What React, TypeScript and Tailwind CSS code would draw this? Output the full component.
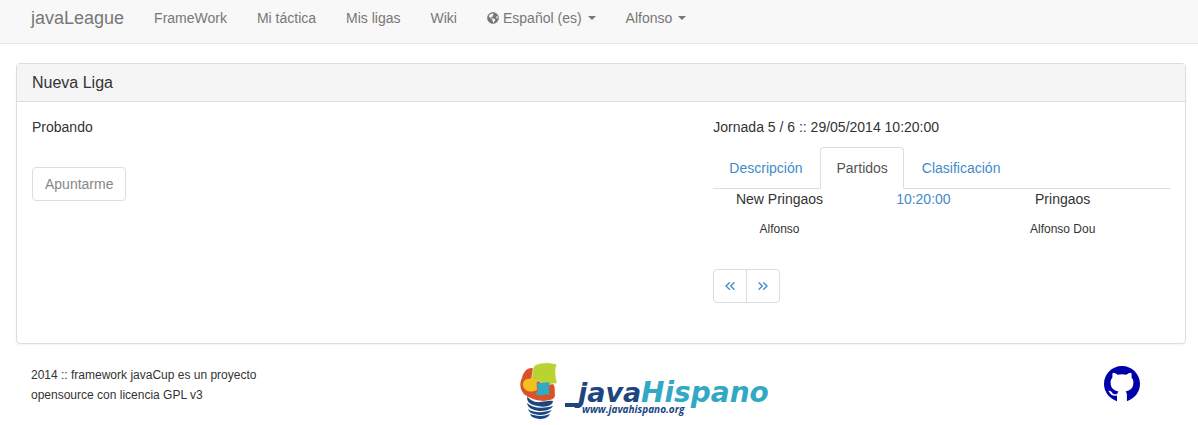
import { ChevronsLeft, ChevronsRight } from "lucide-react";
import { FaGlobeAmericas } from "react-icons/fa";

const navLinks = ["FrameWork", "Mi táctica", "Mis ligas", "Wiki"];

function Caret() {
  return <span className="ml-1.5 inline-block border-x-4 border-t-4 border-x-transparent border-t-[#777] align-middle" />;
}

function Navbar() {
  return (
    <nav className="flex items-center border-b border-[#e7e7e7] bg-[#f8f8f8] pt-2 pb-[15px] pl-[31px] text-[#777]">
      <a href="#" className="mr-[30px] text-lg leading-5">
        javaLeague
      </a>
      <ul className="flex gap-[30px]">
        {navLinks.map((label) => (
          <li key={label}>
            <a href="#">{label}</a>
          </li>
        ))}
        <li>
          <button type="button" className="flex items-center">
            <FaGlobeAmericas size={12} className="mr-1" />
            Español (es)
            <Caret />
          </button>
        </li>
        <li>
          <button type="button" className="flex items-center">
            Alfonso
            <Caret />
          </button>
        </li>
      </ul>
    </nav>
  );
}

function Tabs() {
  return (
    <div role="tablist" className="mt-2.5 flex gap-0.5 border-b border-[#ddd]">
      <button type="button" role="tab" aria-selected="false" className="-mb-px border border-transparent px-[15px] py-2.5 text-[#428bca]">
        Descripción
      </button>
      <button type="button" role="tab" aria-selected="true" className="-mb-px rounded-t border border-[#ddd] border-b-white bg-white px-[15px] py-2.5 text-[#555]">
        Partidos
      </button>
      <button type="button" role="tab" aria-selected="false" className="-mb-px border border-transparent px-[15px] py-2.5 text-[#428bca]">
        Clasificación
      </button>
    </div>
  );
}

function Matches() {
  return (
    <table className="w-full table-fixed text-center">
      <tbody>
        <tr>
          <td className="w-[29%]">New Pringaos</td>
          <td className="w-[34%]">
            <a href="#" className="text-[#428bca]">
              10:20:00
            </a>
          </td>
          <td className="w-[27%]">Pringaos</td>
          <td />
        </tr>
        <tr className="text-xs leading-5">
          <td className="pt-2.5">Alfonso</td>
          <td />
          <td className="pt-2.5">Alfonso Dou</td>
          <td />
        </tr>
      </tbody>
    </table>
  );
}

function JavaHispanoLogo() {
  return (
    <svg width="256" height="62" viewBox="0 0 256 62" role="img" aria-label="javaHispano">
      <path d="M13 8 C7 8 4 13 3 18 C0 23 1 31 6 35 C11 38 18 41 25 41 C32 40 36 39 36 35 C35 31 37 28 34 24 L22 12Z" fill="#d95326" />
      <path d="M15 6 C21 2 30 2 38 4.500 C35 10 37 16 38 23.500 C33 23 30 25 26 26 C21 21 16 19 12 20 C14 15 13 10 15 6Z" fill="#b9d432" stroke="#fff" strokeWidth="0.5" />
      <path d="M6 20 C10 18 15 19 19 20 C17 23 18 27 18 30 C14 32 10 32 7 30 C3 27 3 23 6 20Z" fill="#f6bf20" />
      <path d="M17 23 C22 24 26 21 31 23 C29 27 30 31 31 35 C26 33 22 37 16 34 C20 31 19 27 17 23Z" fill="#32a9c4" />
      <g fill="#1b467f">
        <path d="M9 35 C8 37 10 39 14 41 C20 44 27 40 34 41 C34 45 27 48 19 46 C11 45 6 41 9 35Z" />
        <path d="M8 43 C13 48 23 49 34 46 C32 50 26 51 20 51 C13 50 9 48 8 43Z" />
        <path d="M9 49 C14 53 24 53 33 50 C30 54 25 55 20 55 C14 54 10 53 9 49Z" />
        <path d="M11 54 C16 56 24 57 31 54 C29 58 25 59 20 59 C15 58 12 57 11 54Z" />
        <path d="M46 43 H60 L58 47 H46Z" />
      </g>
      <g fontFamily="'DejaVu Sans', sans-serif" fontWeight="700" fontStyle="italic">
        <text x="59" y="42" fontSize="27" fill="#1b467f">
          java
        </text>
        <text x="122" y="42" fontSize="28" fill="#32a9c4">
          Hispano
        </text>
      </g>
      <text x="63" y="53" fill="#1b467f" fontFamily="'Open Sans', sans-serif" fontSize="10" fontWeight="700" fontStyle="italic">
        www.javahispano.org
      </text>
    </svg>
  );
}

function GithubMark() {
  return (
    <svg width="36" height="36" viewBox="0 0 36 36" fill="#0000aa" aria-hidden="true">
      <path d="M18 0C8 0 0 8 0 18c0 8 5.500 14.800 13 17.200V29.500C9 30.200 7 29 6 27.300c-.8-1.300-1.100-1.800-1.800-2.500 2.200-.3 3 .6 4 2 1.200 1.700 3 1.800 5 1.100.2-1 .6-1.800 1.200-2.500C10 24.600 6.600 22.500 6.600 16.300c0-2 .7-3.600 1.900-4.900-.3-1.300-.2-3 .3-4.700 1.800 0 3.400.9 4.900 2 2.900-.7 5.700-.7 8.600 0 1.500-1.100 3.100-2 4.900-2 .5 1.700.6 3.400.3 4.700 1.200 1.300 1.900 2.900 1.900 4.900 0 6.200-3.600 8.500-7.800 9.100.9.900 1.300 2 1.300 3.700V35.200C30.500 32.800 36 26 36 18 36 8 28 0 18 0Z" />
    </svg>
  );
}

export default function App() {
  return (
    <div className="bg-white font-['Liberation_Sans',Arial,sans-serif] text-sm leading-5 text-[#333]">
      <Navbar />
      <main className="mt-[19px] mr-3 ml-4 rounded border border-[#ddd] shadow-xs">
        <h1 className="border-b border-[#ddd] bg-[#f5f5f5] px-[15px] py-2 text-base leading-[21px]">Nueva Liga</h1>
        <div className="grid grid-cols-12 pt-[15px] pb-10">
          <section className="col-span-7 px-[15px]">
            <p>Probando</p>
            <button type="button" className="mt-[30px] rounded border border-[#ddd] px-3 py-1.5 text-[#888]">
              Apuntarme
            </button>
          </section>
          <section className="col-span-5 px-[15px]">
            <p>Jornada 5 / 6 :: 29/05/2014 10:20:00</p>
            <Tabs />
            <Matches />
            <div className="mt-[30px] flex text-[#428bca]">
              <button type="button" aria-label="Anterior" className="flex h-[34px] w-[34px] items-center justify-center rounded-l border border-[#ddd]">
                <ChevronsLeft size={16} strokeWidth={2} />
              </button>
              <button type="button" aria-label="Siguiente" className="-ml-px flex h-[34px] w-[34px] items-center justify-center rounded-r border border-[#ddd]">
                <ChevronsRight size={16} strokeWidth={2} />
              </button>
            </div>
          </section>
        </div>
      </main>
      <footer className="mt-4 mr-3 ml-4 grid grid-cols-12 items-start">
        <div className="col-span-5 px-[15px] pt-[5px]">
          <p className="max-w-60 text-xs leading-5">2014 :: framework javaCup es un proyecto opensource con licencia GPL v3</p>
        </div>
        <a href="#" className="col-span-5 px-[15px]">
          <JavaHispanoLogo />
        </a>
        <div className="col-span-2 flex justify-end pt-1.5 pr-[46px]">
          <a href="#" aria-label="GitHub">
            <GithubMark />
          </a>
        </div>
      </footer>
    </div>
  );
}
